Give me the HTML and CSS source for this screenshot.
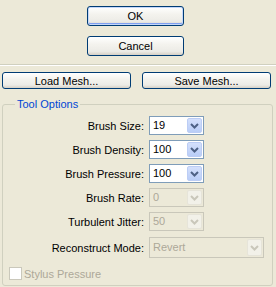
FILE: index.html
```html
<!DOCTYPE html>
<html lang="en">
<head>
    <meta charset="UTF-8">
    <title>Liquify Options</title>
    <link rel="stylesheet" href="styles.css">
</head>
<body>
    <div class="dialog-buttons">
        <button class="btn btn-default">OK</button>
        <button class="btn">Cancel</button>
    </div>

    <div class="separator"></div>

    <div class="mesh-buttons">
        <button class="btn btn-mesh">Load Mesh...</button>
        <button class="btn btn-mesh">Save Mesh...</button>
    </div>

    <fieldset class="options">
        <legend>Tool Options</legend>

        <div class="option-grid">
            <label>Brush Size:</label>
            <div class="combo">
                <span class="combo-value">19</span>
                <span class="combo-arrow">
                    <svg width="9" height="6" viewBox="0 0 9 6"><path d="M1 1 L4.5 4.5 L8 1" fill="none" stroke="currentColor" stroke-width="2"/></svg>
                </span>
            </div>

            <label>Brush Density:</label>
            <div class="combo">
                <span class="combo-value">100</span>
                <span class="combo-arrow">
                    <svg width="9" height="6" viewBox="0 0 9 6"><path d="M1 1 L4.5 4.5 L8 1" fill="none" stroke="currentColor" stroke-width="2"/></svg>
                </span>
            </div>

            <label>Brush Pressure:</label>
            <div class="combo">
                <span class="combo-value">100</span>
                <span class="combo-arrow">
                    <svg width="9" height="6" viewBox="0 0 9 6"><path d="M1 1 L4.5 4.5 L8 1" fill="none" stroke="currentColor" stroke-width="2"/></svg>
                </span>
            </div>

            <label>Brush Rate:</label>
            <div class="combo disabled">
                <span class="combo-value">0</span>
                <span class="combo-arrow">
                    <svg width="9" height="6" viewBox="0 0 9 6"><path d="M1 1 L4.5 4.5 L8 1" fill="none" stroke="currentColor" stroke-width="2"/></svg>
                </span>
            </div>

            <label>Turbulent Jitter:</label>
            <div class="combo disabled">
                <span class="combo-value">50</span>
                <span class="combo-arrow">
                    <svg width="9" height="6" viewBox="0 0 9 6"><path d="M1 1 L4.5 4.5 L8 1" fill="none" stroke="currentColor" stroke-width="2"/></svg>
                </span>
            </div>

            <label class="wide-label">Reconstruct Mode:</label>
            <div class="combo combo-wide disabled">
                <span class="combo-value">Revert</span>
                <span class="combo-arrow">
                    <svg width="9" height="6" viewBox="0 0 9 6"><path d="M1 1 L4.5 4.5 L8 1" fill="none" stroke="currentColor" stroke-width="2"/></svg>
                </span>
            </div>
        </div>

        <div class="check-row">
            <span class="checkbox"></span>
            <span class="check-label">Stylus Pressure</span>
        </div>
    </fieldset>
</body>
</html>
```

FILE: styles.css
```css
/* General Styles */
body {
    font-family: Tahoma, "Liberation Sans", Arial, sans-serif;
    font-size: 11px;
    margin: 0;
    padding: 6px 0 0 0;
    background-color: #ece9d8;
    color: #000;
    height: 287px;
    box-sizing: border-box;
    overflow: hidden;
}

/* Buttons */
.btn {
    font-family: inherit;
    font-size: 11px;
    color: #000;
    border: 1px solid #003c74;
    border-radius: 3px;
    background: linear-gradient(#ffffff 0%, #f4f3ee 40%, #ecebe6 80%, #d6d0c5 100%);
    padding: 0;
    margin: 0;
}

.btn-default {
    box-shadow: inset 0 0 0 1px #c4d7fa, inset 0 -1px 0 1px #7f9ff0;
}

.dialog-buttons {
    display: flex;
    flex-direction: column;
    gap: 10px;
    padding-left: 87px;
}

.dialog-buttons .btn {
    width: 97px;
    height: 20px;
}

.separator {
    margin-top: 8px;
    height: 1px;
    background-color: #d0d0bf;
    border-bottom: 1px solid #ffffff;
}

.mesh-buttons {
    display: flex;
    gap: 11px;
    margin: 6px 0 0 2px;
}

.btn-mesh {
    width: 129px;
    height: 17px;
}

/* Tool Options group */
.options {
    margin: 9px 3px 0 2px;
    padding: 5px 0 0 0;
    border: 1px solid #d0d0bf;
    border-radius: 3px;
    height: 188px;
    box-sizing: border-box;
}

.options legend {
    color: #0046d5;
    margin-left: 12px;
    padding: 0 2px;
    line-height: 13px;
}

.option-grid {
    display: grid;
    grid-template-columns: 141px auto;
    column-gap: 5px;
    row-gap: 5px;
    align-items: center;
}

.option-grid label {
    text-align: right;
}

.wide-label {
    margin-top: 1px;
}

/* Combo boxes */
.combo {
    display: flex;
    align-items: stretch;
    width: 55px;
    height: 19px;
    box-sizing: border-box;
    border: 1px solid #7f9db9;
    background-color: #fff;
}

.combo-wide {
    width: 115px;
    height: 21px;
    margin-top: 1px;
}

.combo-value {
    flex: 1;
    padding-left: 3px;
    line-height: 17px;
}

.combo-wide .combo-value {
    line-height: 19px;
}

.combo-arrow {
    width: 15px;
    margin: 1px;
    border-radius: 2px;
    display: flex;
    align-items: center;
    justify-content: center;
    color: #4d6185;
    background: linear-gradient(#d4e0fc, #b9cdf7);
    border: 1px solid #bccdf5;
    box-sizing: border-box;
}

.combo.disabled {
    border-color: #c9c7ba;
    background-color: #ece9d8;
    color: #aca899;
}

.combo.disabled .combo-arrow {
    color: #c9c7ba;
    background: #f2f1e9;
    border-color: #e6e4d9;
}

/* Checkbox row */
.check-row {
    display: flex;
    align-items: center;
    gap: 2px;
    margin: 9px 0 0 6px;
}

.checkbox {
    width: 13px;
    height: 13px;
    box-sizing: border-box;
    border: 1px solid #cac8bb;
    background-color: #fff;
}

.check-label {
    color: #aca899;
}
```
